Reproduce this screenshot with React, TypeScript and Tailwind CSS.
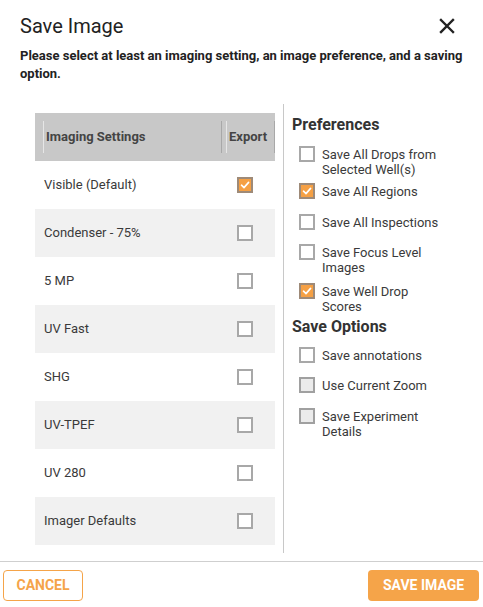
import React from "react";

type BoxState = "checked" | "unchecked" | "disabled";

function Box({ state }: { state: BoxState }) {
  if (state === "checked") {
    return (
      <div className="w-4 h-4 shrink-0 border-2 border-[#9e8a78] bg-[#f5a044] flex items-center justify-center">
        <svg width="10" height="10" viewBox="0 0 10 10" fill="none">
          <path d="M1.5 5.2 L4 7.6 L8.6 2.4" stroke="#ffffff" strokeWidth="1.6" strokeLinecap="round" strokeLinejoin="round" />
        </svg>
      </div>
    );
  }
  if (state === "disabled") {
    return <div className="w-4 h-4 shrink-0 border-2 border-[#a0a0a0] bg-[#ebebeb]" />;
  }
  return <div className="w-4 h-4 shrink-0 border-2 border-[#a8a8a8] bg-white" />;
}

const rows: { name: string; checked: boolean }[] = [
  { name: "Visible (Default)", checked: true },
  { name: "Condenser - 75%", checked: false },
  { name: "5 MP", checked: false },
  { name: "UV Fast", checked: false },
  { name: "SHG", checked: false },
  { name: "UV-TPEF", checked: false },
  { name: "UV 280", checked: false },
  { name: "Imager Defaults", checked: false },
];

function Option({ label, state, cls }: { label: string; state: BoxState; cls: string }) {
  return (
    <div className={"flex items-start gap-[7px] pl-[15px] " + cls}>
      <Box state={state} />
      <div className="w-[122px] text-[13px] leading-[15px] text-[#3a3a3a] mt-[1px]">{label}</div>
    </div>
  );
}

export default function App() {
  return (
    <div
      className="w-[483px] h-[607px] bg-white flex flex-col text-[#222]"
      style={{ fontFamily: "Roboto, 'Liberation Sans', sans-serif" }}
    >
      <div className="flex items-center justify-between pl-5 pr-[28px] pt-[14px]">
        <div className="text-[20px] leading-[24px] text-[#222]">Save Image</div>
        <svg width="16" height="16" viewBox="0 0 16 16">
          <path d="M2 2 L14 14 M14 2 L2 14" stroke="#222" strokeWidth="2.4" strokeLinecap="square" />
        </svg>
      </div>
      <div className="px-5 mt-[9px] text-[13px] leading-[18px] font-bold text-[#222]">
        Please select at least an imaging setting, an image preference, and a saving option.
      </div>
      <div className="flex mt-[21px] h-[449px]">
        <div className="w-[283px] pl-[35px] pr-[8px] pt-[9px]">
          <div className="w-[240px]">
            <div className="h-[48px] bg-[#c8c8c8] flex items-center text-[13px] font-bold text-[#444]">
              <div className="flex-1 flex items-center h-[32px]">
                <div className="ml-[8px] w-px h-[32px] bg-[#e6e6e6]" />
                <div className="ml-[2px] flex-1">Imaging Settings</div>
                <div className="w-px h-[32px] bg-[#a8a8a8] mr-[4px]" />
              </div>
              <div className="w-[49px] flex items-center h-[32px]">
                <div className="w-px h-[32px] bg-[#e6e6e6]" />
                <div className="ml-[2px] flex-1">Export</div>
                <div className="w-px h-[32px] bg-[#a8a8a8]" />
              </div>
            </div>
            {rows.map((r, i) => (
              <div
                key={r.name}
                className={
                  "h-[48px] flex items-center text-[13px] text-[#3a3a3a] " +
                  (i % 2 === 0 ? "bg-white" : "bg-[#f1f1f1]")
                }
              >
                <div className="flex-1 pl-[9px]">{r.name}</div>
                <div className="pr-[22px]">
                  <Box state={r.checked ? "checked" : "unchecked"} />
                </div>
              </div>
            ))}
          </div>
        </div>
        <div className="flex-1 border-l border-[#c8c8c8] pt-[11px]">
          <div className="pl-[8px] text-[16px] leading-[20px] font-bold text-[#333]">Preferences</div>
          <div className="mt-[11px]">
            <Option label="Save All Drops from Selected Well(s)" state="unchecked" cls="h-[37px]" />
            <Option label="Save All Regions" state="checked" cls="h-[31px]" />
            <Option label="Save All Inspections" state="unchecked" cls="h-[30px]" />
            <Option label="Save Focus Level Images" state="unchecked" cls="h-[39px]" />
            <Option label="Save Well Drop Scores" state="checked" cls="h-[34px]" />
          </div>
          <div className="pl-[8px] text-[16px] leading-[20px] font-bold text-[#333]">Save Options</div>
          <div className="mt-[10px]">
            <Option label="Save annotations" state="unchecked" cls="h-[30px]" />
            <Option label="Use Current Zoom" state="disabled" cls="h-[31px]" />
            <Option label="Save Experiment Details" state="disabled" cls="h-[38px]" />
          </div>
        </div>
      </div>
      <div className="mt-[8px] border-t border-[#cfcfcf] flex justify-between pl-[3px] pr-[4px] pt-[8px]">
        <button className="w-[80px] h-[31px] border border-[#f5a449] rounded-[4px] text-[#f5a449] text-[14px] font-bold bg-white">
          CANCEL
        </button>
        <button className="w-[111px] h-[31px] rounded-[4px] bg-[#f5a449] text-white text-[14px] font-bold">
          SAVE IMAGE
        </button>
      </div>
    </div>
  );
}
